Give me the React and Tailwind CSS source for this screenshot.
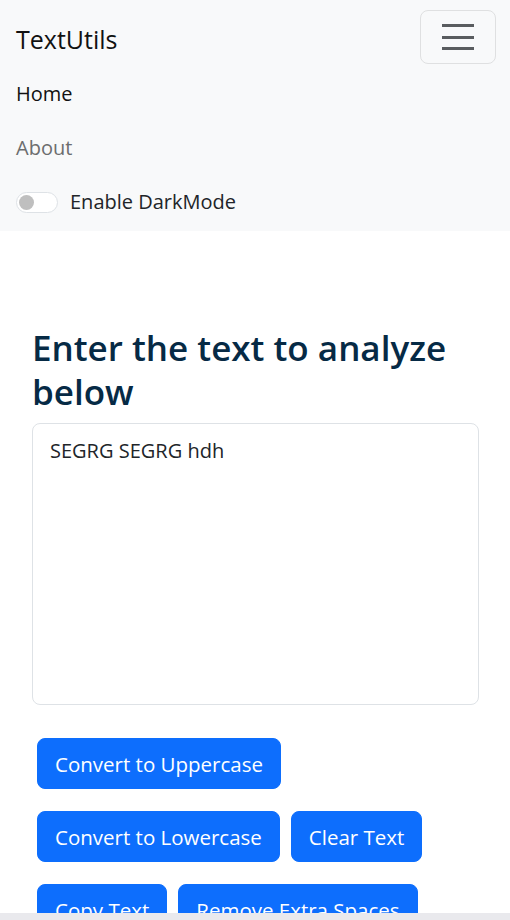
import React from 'react';

/**
 * TextUtils page (collapsed mobile navbar + text form)
 */
const font = { fontFamily: '"Open Sans", "Noto Sans", sans-serif' };

const Btn = ({ children }) => (
  <button className="h-[51px] px-[17px] rounded-[8px] bg-[#0d6efd] border border-[#0d6efd] text-white text-[20.5px] leading-[30px] whitespace-nowrap">
    {children}
  </button>
);

export default function App() {
  return (
    <div style={font} className="w-[510px] h-[920px] bg-white flex flex-col">
      <div className="h-[913px] overflow-hidden">
        {/* Navbar */}
        <nav className="bg-[#f8f9fa] h-[231px] px-[16px] pt-[10px]">
          <div className="flex items-center justify-between h-[54px]">
            <span className="text-[25px] text-[#111] leading-none pt-[4px]">TextUtils</span>
            <button className="w-[76px] h-[54px] mr-[-2px] rounded-[8px] border border-[#dfe0e1] flex flex-col items-center justify-center gap-[8.6px]">
              <span className="block w-[32px] h-[3px] bg-[#595c5f]" />
              <span className="block w-[32px] h-[3px] bg-[#595c5f]" />
              <span className="block w-[32px] h-[3px] bg-[#595c5f]" />
            </button>
          </div>
          <ul className="flex flex-col">
            <li className="h-[54px] flex items-center pt-[6px] text-[20px] text-[#111]">Home</li>
            <li className="h-[54px] flex items-center pt-[6px] text-[20px] text-[#6c6d6e]">About</li>
          </ul>
          <div className="flex items-center gap-[12px] mt-[3px] h-[54px]">
            <div className="w-[42px] h-[21px] rounded-full border border-[#dee2e6] bg-white flex items-center pl-[2px]">
              <span className="block w-[15px] h-[15px] rounded-full bg-[#bfbfbf]" />
            </div>
            <span className="text-[20px] text-[#212529]">Enable DarkMode</span>
          </div>
        </nav>

        {/* Main */}
        <main className="px-[32px] pt-[95px]">
          <h1 className="text-[35px] leading-[44px] font-semibold text-[#062a45] pr-[20px]">
            Enter the text to analyze below
          </h1>
          <div className="mt-[9px] w-[447px] h-[282px] rounded-[8px] border border-[#dee2e6] px-[17px] py-[11px] text-[20px] leading-[32px] text-[#212529]">
            SEGRG SEGRG hdh
          </div>
          <div className="flex flex-col gap-[22px] mt-[33px] pl-[5px]">
            <div className="flex gap-[11px]">
              <Btn>Convert to Uppercase</Btn>
            </div>
            <div className="flex gap-[11px]">
              <Btn>Convert to Lowercase</Btn>
              <Btn>Clear Text</Btn>
            </div>
            <div className="flex gap-[11px]">
              <Btn>Copy Text</Btn>
              <Btn>Remove Extra Spaces</Btn>
            </div>
          </div>
        </main>
      </div>
      <div className="h-[7px] bg-[#e9e9ed]" />
    </div>
  );
}
